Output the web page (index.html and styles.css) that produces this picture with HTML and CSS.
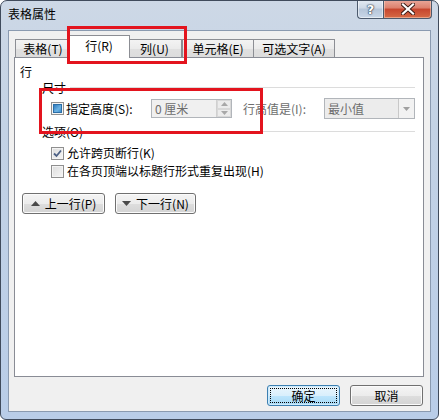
FILE: index.html
```html
<!DOCTYPE html>
<html>
<head>
<meta charset="utf-8">
<link rel="stylesheet" href="styles.css">
</head>
<body>
<div class="window">
  <div class="titlebar">
    <span class="title">表格属性</span>
    <div class="caption-btns">
      <div class="cbtn help">?</div>
      <div class="cbtn close">
        <svg width="14" height="12" viewBox="0 0 14 12"><path d="M2 1.5 L12 10.5 M12 1.5 L2 10.5" stroke="#3a1a14" stroke-width="4" stroke-linecap="square"/><path d="M2 1.5 L12 10.5 M12 1.5 L2 10.5" stroke="#fff" stroke-width="2.2" stroke-linecap="square"/></svg>
      </div>
    </div>
  </div>
  <div class="client">
    <div class="tabs">
      <div class="tab t1">表格(T)</div>
      <div class="tab t2 sel">行(R)</div>
      <div class="tab t3">列(U)</div>
      <div class="tab t4">单元格(E)</div>
      <div class="tab t5">可选文字(A)</div>
    </div>
    <div class="panel">
      <div class="ptitle">行</div>
      <div class="ghead"><span>尺寸</span><i class="rule"></i></div>
      <div class="size-row">
        <span class="cb ind"><i></i></span>
        <span class="lbl l1">指定高度(S):</span>
        <div class="spin">
          <span class="val">0 厘米</span>
          <div class="spinbtn">
            <div class="sb"><svg width="7" height="4" viewBox="0 0 7 4"><path d="M0 4 L3.5 0 L7 4Z" fill="#a8a8a8"/></svg></div>
            <div class="sb"><svg width="7" height="4" viewBox="0 0 7 4"><path d="M0 0 L3.5 4 L7 0Z" fill="#a8a8a8"/></svg></div>
          </div>
        </div>
        <span class="lbl l2 dis">行高值是(I):</span>
        <div class="combo">
          <span class="val">最小值</span>
          <div class="dd"><svg width="7" height="4" viewBox="0 0 7 4"><path d="M0 0 L3.5 4 L7 0Z" fill="#a0a0a0"/></svg></div>
        </div>
      </div>
      <div class="ghead opt"><span>选项(O)</span><i class="rule"></i></div>
      <div class="cbrow r1"><span class="cb chk"><svg width="9" height="9" viewBox="0 0 9 9"><path d="M1 4.5 L3.5 7 L8 1.5" fill="none" stroke="#4d6185" stroke-width="1.8"/></svg></span><span>允许跨页断行(K)</span></div>
      <div class="cbrow r2"><span class="cb"></span><span>在各页顶端以标题行形式重复出现(H)</span></div>
      <div class="nav">
        <button class="btn nb1"><svg width="9" height="5" viewBox="0 0 9 5"><path d="M0 5 L4.5 0 L9 5Z" fill="#4a4a4a"/></svg><span>上一行(P)</span></button>
        <button class="btn nb2"><svg width="9" height="5" viewBox="0 0 9 5"><path d="M0 0 L4.5 5 L9 0Z" fill="#4a4a4a"/></svg><span>下一行(N)</span></button>
      </div>
    </div>
    <div class="footer">
      <button class="btn wide default">确定</button>
      <button class="btn wide">取消</button>
    </div>
  </div>
  <div class="mark m1"></div>
  <div class="mark m2"></div>
</div>
</body>
</html>
```
FILE: styles.css
```css
html, body {
  margin: 0;
  padding: 0;
  background: #ffffff;
}
body {
  font-family: "Noto Sans CJK SC", "Noto Sans", sans-serif;
  font-size: 12px;
  color: #000;
}
.window {
  position: relative;
  width: 439px;
  height: 420px;
  box-sizing: border-box;
  border: 1px solid #404b5c;
  border-radius: 7px 7px 6px 6px;
  background: linear-gradient(180deg, #cdd8e6 0%, #c3d2e5 30%, #b9cde8 100%);
  padding: 0 7px 7px 7px;
  display: flex;
  flex-direction: column;
  overflow: hidden;
}
.titlebar {
  height: 29px;
  display: flex;
  justify-content: space-between;
  align-items: flex-start;
}
.title {
  margin-top: 5px;
  line-height: 16px;
  font-size: 12px;
}
.caption-btns {
  display: flex;
  margin-top: -1px;
  margin-right: -1px;
}
.cbtn {
  box-sizing: border-box;
  height: 19px;
  border: 1px solid #4c5a6d;
  border-top: none;
  display: flex;
  align-items: center;
  justify-content: center;
}
.help {
  width: 26px;
  border-right: none;
  border-radius: 0 0 0 4px;
  background: linear-gradient(180deg, #e3eaf3 0%, #cdd8e6 45%, #b5c5d9 50%, #c9d7e8 100%);
  color: #fff;
  font-family: "DejaVu Sans", sans-serif;
  font-weight: bold;
  font-size: 13px;
  text-shadow: 0 0 1px #2c3a4d, 0 0 1px #2c3a4d, 0 0 2px #2c3a4d;
  box-shadow: inset 0 0 0 1px rgba(255,255,255,0.5);
}
.close {
  width: 49px;
  border-radius: 0 0 4px 0;
  background: linear-gradient(180deg, #e9a99c 0%, #dc7f6c 45%, #c6452e 50%, #d66a45 100%);
  box-shadow: inset 0 0 0 1px rgba(255,220,200,0.5);
}
.client {
  flex: 1;
  border: 1px solid #8a9ab0;
  background: #f0f0f0;
  display: flex;
  flex-direction: column;
}
.tabs {
  height: 27px;
  display: flex;
  align-items: flex-end;
  padding-left: 6px;
  position: relative;
  z-index: 1;
}
.tab {
  box-sizing: border-box;
  height: 18px;
  border: 1px solid #8c8e94;
  border-bottom: none;
  border-right: none;
  background: linear-gradient(180deg, #f3f3f3 0%, #ebebeb 50%, #e0e0e0 50%, #dcdcdc 100%);
  display: flex;
  align-items: center;
  justify-content: center;
  line-height: 14px;
  margin-bottom: 1px;
}
.t1 { width: 55px; }
.t2 { width: 58px; }
.t3 { width: 54px; border-right: 1px solid #8c8e94; }
.t4 { width: 71px; }
.t5 { width: 82px; border-right: 1px solid #8c8e94; }
.tab.sel {
  height: 23px;
  margin: 0 -2px 0 -2px;
  width: 62px;
  background: #ffffff;
  border-right: 1px solid #8c8e94;
  padding-bottom: 3px;
  position: relative;
  z-index: 2;
}
.t3 { border-left: none; }
.panel {
  box-sizing: border-box;
  width: 410px;
  height: 320px;
  margin: -1px 0 0 5px;
  border: 1px solid #898c95;
  background: #ffffff;
  padding: 0 8px 0 5px;
  display: flex;
  flex-direction: column;
}
.ptitle {
  margin-top: 7px;
  line-height: 14px;
  height: 14px;
}
.ghead {
  margin-top: 2px;
  margin-left: 22px;
  height: 14px;
  line-height: 14px;
  display: flex;
  align-items: center;
}
.ghead .rule {
  flex: 1;
  height: 0;
  border-top: 1px solid #dcdcdc;
  margin-left: 4px;
  margin-top: -1px;
}
.ghead.opt {
  margin-top: 6px;
}
.size-row {
  margin-top: 3px;
  margin-left: 31px;
  height: 21px;
  display: flex;
  align-items: center;
}
.cb {
  box-sizing: border-box;
  width: 13px;
  height: 13px;
  border: 1px solid #8f8f8f;
  background: linear-gradient(135deg, #dcdcdc 0%, #f6f6f6 100%);
  box-shadow: inset 0 0 0 1px #f4f4f4;
  display: flex;
  align-items: center;
  justify-content: center;
  flex: none;
}
.cb.ind i {
  width: 7px;
  height: 7px;
  border: 1px solid #2b6ea6;
  background: linear-gradient(135deg, #2f7bbf 0%, #6cb3e4 60%, #3d8ccb 100%);
}
.lbl { line-height: 14px; }
.l1 { width: 85px; margin-left: 2px; }
.l2 { width: 81px; margin-left: 11px; }
.dis { color: #6d6d6d; }
.spin {
  box-sizing: border-box;
  width: 81px;
  height: 19px;
  border: 1px solid #b1b5ba;
  background: #f0f0f0;
  display: flex;
  align-items: stretch;
}
.spin .val, .combo .val {
  flex: 1;
  color: #6d6d6d;
  padding-left: 3px;
  line-height: 17px;
}
.spinbtn {
  width: 14px;
  display: flex;
  flex-direction: column;
  border-left: 1px solid #d0d0d0;
}
.sb {
  flex: 1;
  display: flex;
  align-items: center;
  justify-content: center;
  background: #ececec;
  border: 1px solid #d8d8d8;
}
.combo {
  box-sizing: border-box;
  width: 91px;
  height: 21px;
  border: 1px solid #b1b5ba;
  background: #ececec;
  display: flex;
  align-items: stretch;
}
.combo .val { line-height: 19px; }
.dd {
  width: 15px;
  border-left: 1px solid #c8c8c8;
  background: #f2f2f2;
  display: flex;
  align-items: center;
  justify-content: center;
}
.cbrow {
  margin-left: 31px;
  height: 14px;
  line-height: 14px;
  display: flex;
  align-items: center;
}
.cbrow .cb { margin-right: 3px; }
.cbrow.r1 { margin-top: 7px; }
.cbrow.r2 { margin-top: 4px; }
.nav {
  margin-top: 15px;
  margin-left: 2px;
  display: flex;
  gap: 10px;
}
.btn {
  box-sizing: border-box;
  position: relative;
  height: 21px;
  border: 1px solid #707070;
  border-radius: 3px;
  background: linear-gradient(180deg, #f4f4f4 0%, #ececec 50%, #dedede 50%, #d3d3d3 100%);
  box-shadow: inset 0 0 0 1px #fbfbfb;
  font-family: inherit;
  font-size: 12px;
  color: #000;
  padding: 0;
  display: flex;
  align-items: center;
  justify-content: center;
  gap: 5px;
  line-height: 14px;
}
.nb1 { width: 83px; }
.nb2 { width: 81px; }
.footer {
  flex: 1;
  display: flex;
  justify-content: flex-end;
  align-items: flex-start;
  gap: 10px;
  padding: 8px 7px 0 0;
}
.btn.wide { width: 73px; }
.btn.default {
  border-color: #3c7fb1;
  background: linear-gradient(180deg, #eaf6fd 0%, #d9effc 50%, #bee6fd 50%, #a7d9f5 100%);
  box-shadow: inset 0 0 0 1px #cfeafa;
}
.btn.default::after {
  content: "";
  position: absolute;
  left: 2px;
  top: 2px;
  right: 2px;
  bottom: 2px;
  border: 1px dotted #000;
}
.mark {
  position: absolute;
  box-sizing: border-box;
  border: 3px solid #e3141e;
  z-index: 5;
}
.m1 { left: 66px; top: 25px; width: 120px; height: 38px; }
.m2 { left: 38px; top: 87px; width: 224px; height: 46px; }
```
